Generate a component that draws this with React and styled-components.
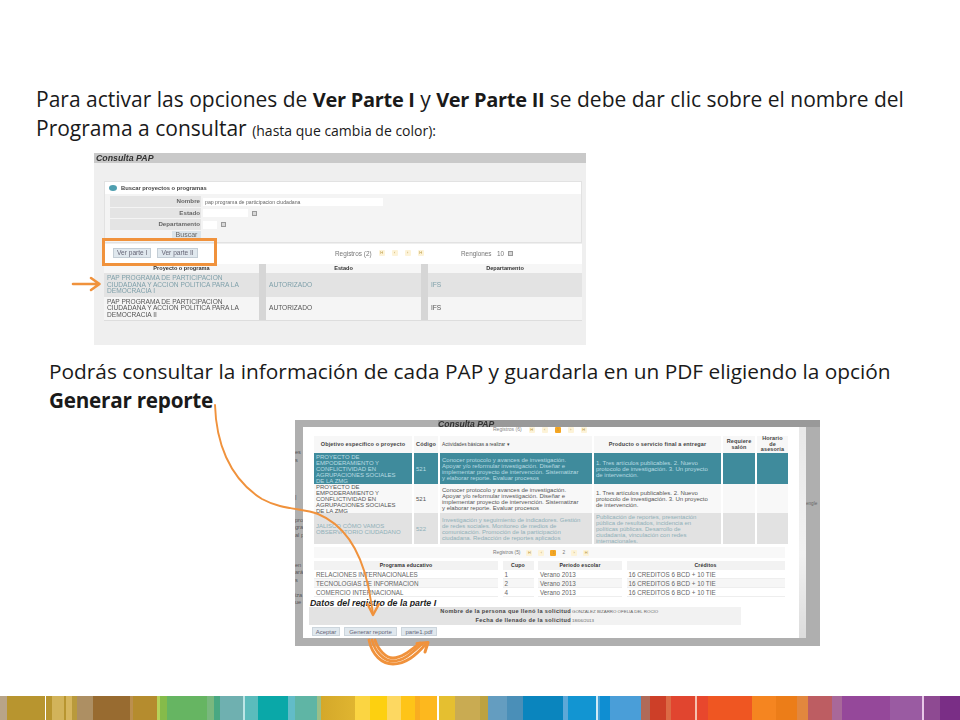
import * as React from "react";
import styled, { createGlobalStyle } from "styled-components";

const GlobalStyle = createGlobalStyle`
  html, body {
    margin: 0;
    padding: 0;
    background: #fff;
  }
`;

const Slide = styled.div`
  position: relative;
  width: 960px;
  height: 720px;
  overflow: hidden;
  display: flex;
  flex-direction: column;
  background: #fff;
  font-family: "Open Sans", "Liberation Sans", sans-serif;
  color: #1a1a1a;
`;

const Intro = styled.div`
  margin: 85px 0 0 36px;
  font-size: 21px;
  line-height: 29px;
  white-space: nowrap;

  b {
    font-size: 20px;
    letter-spacing: -0.3px;
    line-height: 1;
  }
`;

const Small = styled.span`
  font-size: 14px;
  line-height: 1;
`;

const Note = styled.div`
  margin: 12px 0 0 49px;
  font-size: 20.85px;
  line-height: 29px;
  white-space: nowrap;

  b {
    font-size: 20.7px;
    letter-spacing: -0.25px;
  }
`;

const Shot = styled.div`
  position: relative;
  flex: none;
  font-family: "Liberation Sans", Arial, sans-serif;
  filter: blur(0.4px);
`;

/* first capture */
const SearchShot = styled(Shot)`
  width: 492px;
  height: 192px;
  margin: 10px 0 0 94px;
  background: #efefef;
  color: #555;
`;

const TitleBar = styled.div`
  height: 10px;
  padding-left: 2px;
  background: #c9c9c9;
  font-size: 8.8px;
  font-weight: bold;
  font-style: italic;
  line-height: 10px;
  color: #333;
`;

const Panel = styled.div`
  margin: 18px 4px 0 10px;
  background: #f4f4f4;
  border: 1px solid #e2e2e2;
`;

const PanelHead = styled.div`
  height: 12px;
  display: flex;
  align-items: center;
  gap: 4px;
  padding-left: 4px;
  background: #fff;
  font-size: 5.8px;
  font-weight: bold;
  color: #444;
`;

const Dot = styled.span`
  width: 8px;
  height: 6px;
  border-radius: 50%;
  background: #4f9fb0;
`;

const Form = styled.div`
  display: grid;
  grid-template-columns: 91px 1fr;
  grid-auto-rows: 11.5px;
  gap: 0 2px;
  margin: 2px 0 0 5px;
  height: 46px;
`;

const FieldLabel = styled.div`
  background: #e4e4e4;
  margin-bottom: 1px;
  padding-right: 1px;
  text-align: right;
  font-size: 6.2px;
  font-weight: bold;
  line-height: 10px;
  color: #666;
`;

const FieldValue = styled.div`
  display: flex;
  align-items: center;
  gap: 4px;
  font-size: 5.2px;
  color: #666;
`;

const Input = styled.span`
  display: block;
  width: ${(p) => p.$w}px;
  height: 8px;
  padding-left: 2px;
  background: #fff;
  line-height: 8px;
`;

const Spin = styled.span`
  width: 5px;
  height: 5px;
  background: #d8d8d8;
  border: 1px solid #999;
  box-sizing: border-box;
`;

const SearchButton = styled.div`
  justify-self: end;
  align-self: start;
  width: 29px;
  height: 7px;
  background: #dbe4ea;
  font-size: 7px;
  line-height: 7px;
  text-align: center;
  color: #666;
`;

const Toolbar = styled.div`
  position: relative;
  display: grid;
  grid-template-columns: 222px 126px 1fr;
  align-items: center;
  height: 18px;
  margin: 1px 4px 0 10px;
  padding: 0 0 2px 9px;
  background: #fff;
  font-size: 5.4px;
  color: #666;
`;

const ToolButtons = styled.div`
  display: flex;
  gap: 6px;
`;

const ToolButton = styled.div`
  padding: 0 3px;
  height: 8px;
  line-height: 8px;
  background: #e0e8ee;
  border: 1px solid #c4ced6;
  font-size: 6.6px;
  color: #667;
`;

const Pager = styled.div`
  display: flex;
  align-items: center;
  gap: ${(p) => p.$gap || 4}px;
  font-size: 6.4px;
  color: #777;
`;

const PageDot = styled.span`
  width: 6px;
  height: 6px;
  background: ${(p) => (p.$on ? "#f5a623" : "#fdf3d8")};
  border-radius: 1px;
  text-align: center;
  font-size: 4px;
  line-height: 6px;
  color: #b89640;
`;

const ResultTable = styled.div`
  display: grid;
  grid-template-columns: 155px 155px 154px;
  column-gap: 7px;
  margin: 0 0 0 10px;
  width: 478px;
  border-bottom: 1px solid #ddd;
  font-size: 6.6px;
  line-height: 6.4px;
  background-image: linear-gradient(#d6d6d6, #d6d6d6), linear-gradient(#d6d6d6, #d6d6d6);
  background-size: 7px 100%;
  background-position: 155px 0, 317px 0;
  background-repeat: no-repeat;
`;

const ResultHead = styled.div`
  height: 9px;
  background: #f6f6f6;
  text-align: center;
  font-size: 5.6px;
  font-weight: bold;
  line-height: 9px;
  color: #333;
`;

const ResultCell = styled.div`
  display: flex;
  align-items: center;
  height: ${(p) => p.$h}px;
  padding-left: 3px;
  background: ${(p) => (p.$active ? "#e3e3e3" : "#f5f5f5")};
  color: ${(p) => (p.$active ? "#7fa0aa" : "#555")};
`;

const Highlight = styled.div`
  position: absolute;
  left: 8px;
  top: 85px;
  width: 109px;
  height: 22px;
  border: 3px solid #f0923c;
`;

/* second capture */
const ReportShot = styled(Shot)`
  display: flex;
  width: 525px;
  height: 226px;
  margin: 5px 0 0 295px;
  padding: 7px 0 8px;
  box-sizing: border-box;
  background: linear-gradient(#999, #999) 143px 0 / 100% 7px no-repeat, #afafaf;
  color: #555;
`;

const ReportTitle = styled.div`
  position: absolute;
  left: 143px;
  top: 0;
  font-size: 8.6px;
  font-weight: bold;
  font-style: italic;
  line-height: 8px;
  color: #333;
`;

const SideStrip = styled.div`
  flex: none;
  width: 8px;
  padding-top: 22px;
  overflow: hidden;
  font-size: 5.6px;
  line-height: 7.5px;
  color: #555;
  white-space: nowrap;
`;

const Modal = styled.div`
  flex: none;
  width: 496px;
  padding-left: 11px;
  box-sizing: border-box;
  background: #fff;
`;

const TopPager = styled.div`
  display: flex;
  align-items: flex-start;
  gap: 7px;
  width: 471px;
  height: 9px;
  padding-left: 179px;
  box-sizing: border-box;
  overflow: hidden;
  font-size: 5px;
  line-height: 5px;
  color: #888;
`;

const Scrollbar = styled.div`
  flex: none;
  width: 7px;
  background: linear-gradient(#e8e8e8, #f2f2f2 60%, #dcdcdc);
`;

const EdgeText = styled.div`
  flex: 1;
  padding-top: 74px;
  overflow: hidden;
  font-size: 4.6px;
  color: #666;
`;

const PlanTable = styled.div`
  display: grid;
  grid-template-columns: 98px 24px 152px 127px 32px 31px;
  grid-template-rows: 17px 31px 29px 31px;
  gap: 0 2px;
  width: 471px;
  font-size: 6px;
  line-height: 6px;
`;

const PlanHead = styled.div`
  display: flex;
  align-items: center;
  justify-content: ${(p) => (p.$left ? "flex-start" : "center")};
  padding: 0 2px;
  background: #f7f7f7;
  text-align: center;
  white-space: pre-line;
  font-size: ${(p) => (p.$left ? "4.8px" : "5.5px")};
  font-weight: ${(p) => (p.$left ? "normal" : "bold")};
  letter-spacing: ${(p) => (p.$left ? "0" : "0.15px")};
  line-height: 5.6px;
  color: #444;
`;

const rowStyles = {
  teal: "background:#3f8b9c;color:#b9dbe2;",
  plain: "background:#f8f8f8;color:#555;",
  muted: "background:#e2e2e2;color:#8fb0b8;",
};

const PlanCell = styled.div`
  display: flex;
  align-items: center;
  padding: 0 2px;
  white-space: pre-line;
  ${(p) => rowStyles[p.$kind]}
`;

const MiniPager = styled.div`
  display: flex;
  align-items: center;
  gap: 6px;
  width: 471px;
  height: 11px;
  margin-top: 3px;
  padding-left: 179px;
  box-sizing: border-box;
  background: #f8f8f8;
  font-size: 4.8px;
  color: #777;
`;

const ProgramTable = styled.div`
  display: grid;
  grid-template-columns: 184px 31px 84px 158px;
  grid-auto-rows: 9px;
  column-gap: 4.5px;
  width: 471px;
  margin-top: 3px;
  font-size: 6.3px;
  line-height: 9px;
  color: #666;
`;

const ProgramHead = styled.div`
  background: #f2f2f2;
  text-align: center;
  font-size: 5.2px;
  font-weight: bold;
  letter-spacing: 0.15px;
  color: #333;
`;

const ProgramCell = styled.div`
  padding-left: 2px;
  background: ${(p) => (p.$odd ? "#f6f6f6" : "#fff")};
  border-bottom: 1px solid #eee;
  box-sizing: border-box;
`;

const SectionTitle = styled.div`
  margin: 2px 0 0 -4px;
  height: 8px;
  font-size: 8.8px;
  font-weight: bold;
  font-style: italic;
  line-height: 8px;
  color: #222;
`;

const InfoGrid = styled.div`
  display: grid;
  grid-template-columns: 262px 1fr;
  grid-auto-rows: 9px;
  width: 432px;
  margin-left: -5px;
  background: #f2f2f2;
  font-size: 5.6px;
  line-height: 9px;
`;

const InfoLabel = styled.div`
  background: #e3e3e3;
  text-align: right;
  font-weight: bold;
  letter-spacing: 0.35px;
  color: #444;
`;

const InfoValue = styled.div`
  padding-left: 1px;
  font-size: 4.4px;
  color: #666;
`;

const Actions = styled.div`
  display: flex;
  gap: 4px;
  margin: 2px 0 0 -2px;
`;

const ActionButton = styled.div`
  display: flex;
  align-items: center;
  justify-content: center;
  width: ${(p) => p.$w}px;
  height: 7px;
  background: #e0e8ee;
  border: 1px solid #ccd5dc;
  font-size: 6px;
  white-space: nowrap;
  color: #667;
`;

const Overlay = styled.svg`
  position: absolute;
  left: 0;
  top: 0;
  pointer-events: none;
`;

const Strip = styled.div`
  flex: none;
  height: 24px;
  margin-top: auto;
  background: linear-gradient(90deg,
    #b8a488 0 7px, #b8952f 7px 45px, #fff 45px 46px, #b8952f 46px 52px, #d2b35a 52px 64px,
    #b8952f 64px 66px, #d6b65e 66px 72px, #b99a3c 72px 77px, #ad8f63 77px 93px, #986b30 93px 130px,
    #bb8f4e 130px 133px, #b58c2e 133px 157px, #b6d35a 157px 160px, #85bb4a 160px 167px, #66b562 167px 207px,
    #79b87e 207px 214px, #48a882 214px 220px, #6fb0b0 220px 243px, #bde6e6 243px 245px, #5bbcbc 245px 258px,
    #0aa8a8 258px 288px, #62bcc8 288px 295px, #5fb5a5 295px 317px, #9bbf88 317px 321px, #d4a82a 321px,
    #e0b530 355px, #fbd542 355px 370px, #fdd010 370px 387px, #fdd861 387px 401px, #fec418 401px 415px,
    #f9ad20 415px 420px, #fdb81e 420px 437px, #fff 437px 439px, #e5bf30 439px 455px, #c9ab52 455px 480px,
    #bda240 480px 488px, #649dc0 488px 507px, #4a8fb8 507px 523px, #0a85be 523px 563px, #5ca8d8 563px 568px,
    #1295d2 568px 596px, #d0eaf5 596px 598px, #40a0d8 598px 600px, #0f8ed2 600px 610px, #4a9ed8 610px 641px,
    #b06a58 641px 650px, #cd3f28 650px 666px, #dc6a45 666px 671px, #e1452f 671px 695px, #f5c0b0 695px 697px,
    #e8472d 697px 708px, #ef5622 708px 752px, #f58520 752px 776px, #ec7d18 776px 797px, #e2873e 797px 808px,
    #bd5d62 808px 832px, #a8689a 832px 842px, #95489a 842px 890px, #9a5ba2 890px 922px, #e8c8e8 922px 924px,
    #8e4a92 924px 940px, #7a2e86 940px 960px);
`;

const results = [
  { name: "PAP PROGRAMA DE PARTICIPACION CIUDADANA Y ACCION POLITICA PARA LA DEMOCRACIA I", h: 24, active: true },
  { name: "PAP PROGRAMA DE PARTICIPACION CIUDADANA Y ACCION POLITICA PARA LA DEMOCRACIA II", h: 23, active: false },
];

const firstActivity =
  "Conocer protocolo y avances de investigación.\nApoyar y/o reformular investigación. Diseñar e\nimplementar proyecto de intervención. Sistematizar\ny elaborar reporte. Evaluar procesos";
const firstProject = "PROYECTO DE\nEMPODERAMIENTO Y\nCONFLICTIVIDAD EN\nAGRUPACIONES SOCIALES\nDE LA ZMG";
const firstProduct =
  "1. Tres artículos publicables. 2. Nuevo\nprotocolo de investigación. 3. Un proyecto\nde intervención.";

const plan = [
  { kind: "teal", project: firstProject, code: "521", activity: firstActivity, product: firstProduct },
  { kind: "plain", project: firstProject, code: "521", activity: firstActivity, product: firstProduct },
  {
    kind: "muted",
    project: "JALISCO CÓMO VAMOS\nOBSERVATORIO CIUDADANO",
    code: "522",
    activity:
      "Investigación y seguimiento de indicadores. Gestión\nde redes sociales. Monitoreo de medios de\ncomunicación. Promoción de la participación\nciudadana. Redacción de reportes aplicados",
    product:
      "Publicación de reportes, presentación\npública de resultados, incidencia en\npolíticas públicas. Desarrollo de\nciudadanía, vinculación con redes\ninternacionales.",
  },
];

const programs = [
  ["RELACIONES INTERNACIONALES", "1"],
  ["TECNOLOGIAS DE INFORMACION", "2"],
  ["COMERCIO INTERNACIONAL", "4"],
];

const sideFragments = ["es", "s", "", "", "", "", "|", "", "", "pro", "gra", "al p", "", "", "", "en", "ará", "s", "", "iza", "ue"];

function SearchCapture() {
  return (
    <SearchShot>
      <TitleBar>Consulta PAP</TitleBar>
      <Panel>
        <PanelHead>
          <Dot />
          Buscar proyectos o programas
        </PanelHead>
        <Form>
          <FieldLabel>Nombre</FieldLabel>
          <FieldValue>
            <Input $w={178}>pap programa de participacion ciudadana</Input>
          </FieldValue>
          <FieldLabel>Estado</FieldLabel>
          <FieldValue>
            <Input $w={43} />
            <Spin />
          </FieldValue>
          <FieldLabel>Departamento</FieldLabel>
          <FieldValue>
            <Input $w={12} />
            <Spin />
          </FieldValue>
          <SearchButton>Buscar</SearchButton>
        </Form>
      </Panel>
      <Toolbar>
        <ToolButtons>
          <ToolButton>Ver parte I</ToolButton>
          <ToolButton>Ver parte II</ToolButton>
        </ToolButtons>
        <Pager $gap={7}>
          Registros (2)
          <PageDot>H</PageDot>
          <PageDot>‹</PageDot>
          <PageDot>›</PageDot>
          <PageDot>H</PageDot>
        </Pager>
        <Pager>
          Renglones&nbsp;&nbsp;&nbsp;10
          <Spin />
        </Pager>
      </Toolbar>
      <ResultTable>
        <ResultHead>Proyecto o programa</ResultHead>
        <ResultHead>Estado</ResultHead>
        <ResultHead>Departamento</ResultHead>
        {results.map((r) => (
          <React.Fragment key={r.name}>
            <ResultCell $h={r.h} $active={r.active}>{r.name}</ResultCell>
            <ResultCell $h={r.h} $active={r.active}>AUTORIZADO</ResultCell>
            <ResultCell $h={r.h} $active={r.active}>IFS</ResultCell>
          </React.Fragment>
        ))}
      </ResultTable>
      <Highlight />
    </SearchShot>
  );
}

function ReportCapture() {
  return (
    <ReportShot>
      <ReportTitle>Consulta PAP</ReportTitle>
      <SideStrip>
        {sideFragments.map((f, i) => (
          <div key={i}>{f || "\u00a0"}</div>
        ))}
      </SideStrip>
      <Modal>
        <TopPager>
          Registros (6)
          <PageDot>H</PageDot>
          <PageDot>‹</PageDot>
          <PageDot $on>1</PageDot>
          <PageDot>›</PageDot>
          <PageDot>H</PageDot>
        </TopPager>
        <PlanTable>
          <PlanHead>Objetivo específico o proyecto</PlanHead>
          <PlanHead>Código</PlanHead>
          <PlanHead $left>Actividades básicas a realizar ▾</PlanHead>
          <PlanHead>Producto o servicio final a entregar</PlanHead>
          <PlanHead>{"Requiere\nsalón"}</PlanHead>
          <PlanHead>{"Horario\nde\nasesoría"}</PlanHead>
          {plan.map((row) => (
            <React.Fragment key={row.kind}>
              <PlanCell $kind={row.kind}>{row.project}</PlanCell>
              <PlanCell $kind={row.kind}>{row.code}</PlanCell>
              <PlanCell $kind={row.kind}>{row.activity}</PlanCell>
              <PlanCell $kind={row.kind}>{row.product}</PlanCell>
              <PlanCell $kind={row.kind} />
              <PlanCell $kind={row.kind} />
            </React.Fragment>
          ))}
        </PlanTable>
        <MiniPager>
          Registros (5)
          <PageDot>H</PageDot>
          <PageDot>‹</PageDot>
          <PageDot $on>1</PageDot>
          2
          <PageDot>›</PageDot>
          <PageDot>H</PageDot>
        </MiniPager>
        <ProgramTable>
          <ProgramHead>Programa educativo</ProgramHead>
          <ProgramHead>Cupo</ProgramHead>
          <ProgramHead>Periodo escolar</ProgramHead>
          <ProgramHead>Créditos</ProgramHead>
          {programs.map(([name, seats], i) => (
            <React.Fragment key={name}>
              <ProgramCell $odd={i === 1}>{name}</ProgramCell>
              <ProgramCell $odd={i === 1}>{seats}</ProgramCell>
              <ProgramCell $odd={i === 1}>Verano 2013</ProgramCell>
              <ProgramCell $odd={i === 1}>16 CREDITOS 6 BCD + 10 TIE</ProgramCell>
            </React.Fragment>
          ))}
        </ProgramTable>
        <SectionTitle>Datos del registro de la parte I</SectionTitle>
        <InfoGrid>
          <InfoLabel>Nombre de la persona que llenó la solicitud</InfoLabel>
          <InfoValue>GONZALEZ BIZARRO OFELIA DEL ROCIO</InfoValue>
          <InfoLabel>Fecha de llenado de la solicitud</InfoLabel>
          <InfoValue>18/06/2013</InfoValue>
        </InfoGrid>
        <Actions>
          <ActionButton $w={26}>Aceptar</ActionButton>
          <ActionButton $w={51}>Generar reporte</ActionButton>
          <ActionButton $w={34}>parte1.pdf</ActionButton>
        </Actions>
      </Modal>
      <Scrollbar />
      <EdgeText>engle</EdgeText>
    </ReportShot>
  );
}

function Arrows() {
  return (
    <Overlay width="960" height="720" viewBox="0 0 960 720" fill="none" stroke="#f0923c" strokeLinecap="round" strokeLinejoin="round">
      {/* small arrow beside the selected row */}
      <path d="M73 284H99M91 278L99.5 284L91 290" strokeWidth="2.6" />
      {/* long arrow from the text down to the button */}
      <path d="M215 405C216 440 228 478 262 499C282 510 302 508 318 514C345 525 360 550 368 585C370 596 372 606 373 614" strokeWidth="1.9" />
      <path d="M367.5 604L373 615L379 604" strokeWidth="2.4" />
      {/* thick loop from one button to the next */}
      <path d="M369 640C372 655 382 664 393 664C406 664 416 655 425 645" strokeWidth="2.8" />
      <path d="M372 640C375 652 384 661 393 661C404 661 413 652 422 644" strokeWidth="2.8" />
      <path d="M375 640C378 650 386 658 393 658C402 658 411 650 420 643" strokeWidth="2.8" />
      <path d="M417 643.5L428 642.5L425 652" strokeWidth="3" />
    </Overlay>
  );
}

export default function App() {
  return (
    <Slide>
      <GlobalStyle />
      <Intro>
        <div>
          Para activar las opciones de <b>Ver Parte I</b> y <b>Ver Parte II</b> se debe dar clic sobre el nombre del
        </div>
        <div>
          Programa a consultar <Small>(hasta que cambia de color):</Small>
        </div>
      </Intro>
      <SearchCapture />
      <Note>
        <div>Podrás consultar la información de cada PAP y guardarla en un PDF eligiendo la opción</div>
        <div>
          <b>Generar reporte</b>
        </div>
      </Note>
      <ReportCapture />
      <Strip />
      <Arrows />
    </Slide>
  );
}
